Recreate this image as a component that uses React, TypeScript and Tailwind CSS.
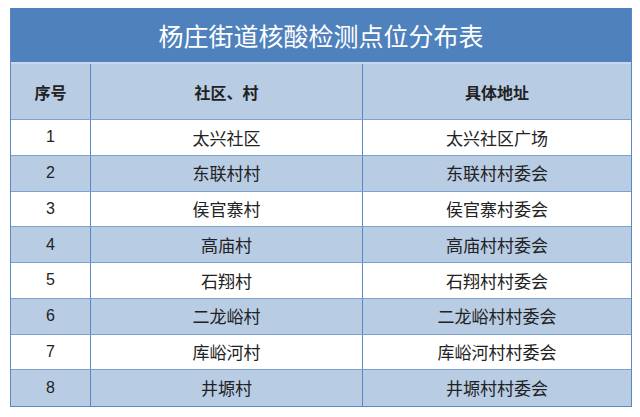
import React from "react";

const rows: [string, string, string][] = [
  ["1", "太兴社区", "太兴社区广场"],
  ["2", "东联村村", "东联村村委会"],
  ["3", "侯官寨村", "侯官寨村委会"],
  ["4", "高庙村", "高庙村村委会"],
  ["5", "石翔村", "石翔村村委会"],
  ["6", "二龙峪村", "二龙峪村村委会"],
  ["7", "库峪河村", "库峪河村村委会"],
  ["8", "井塬村", "井塬村村委会"],
];

export default function App() {
  return (
    <div
      className="w-[640px] h-[417px] bg-white pt-[8px] pl-[10px]"
      style={{ fontFamily: '"Noto Sans CJK SC", "Noto Sans", sans-serif' }}
    >
      <div className="w-[622px] border-l border-r border-b border-[#5b87c4]">
        <div className="h-[54px] bg-[#4f81bd] flex items-center justify-center text-white text-[25px] leading-none">
          杨庄街道核酸检测点位分布表
        </div>
        <div className="grid grid-cols-[80px_272px_1fr] h-[58px] bg-[#b8cce4] border-t-2 border-[#c9d8ec] border-b border-b-[#7ea2cf] text-[16px] font-bold text-[#222]">
          <div className="flex items-center justify-center border-r border-[#5b87c4]">序号</div>
          <div className="flex items-center justify-center border-r border-[#5b87c4]">社区、村</div>
          <div className="flex items-center justify-center">具体地址</div>
        </div>
        {rows.map((r, i) => (
          <div
            key={r[0]}
            className={
              "grid grid-cols-[80px_272px_1fr] h-[35.75px] text-[17px] text-[#222] " +
              (i % 2 === 1 ? "bg-[#b8cce4] " : "bg-white ") +
              (i < rows.length - 1 ? "border-b border-[#7ea2cf]" : "")
            }
          >
            <div className="flex items-center justify-center border-r border-[#5b87c4] text-[16px]" style={{ fontFamily: '"Liberation Sans", "Noto Sans CJK SC", sans-serif' }}>{r[0]}</div>
            <div className="flex items-center justify-center border-r border-[#5b87c4]">{r[1]}</div>
            <div className="flex items-center justify-center">{r[2]}</div>
          </div>
        ))}
      </div>
    </div>
  );
}
